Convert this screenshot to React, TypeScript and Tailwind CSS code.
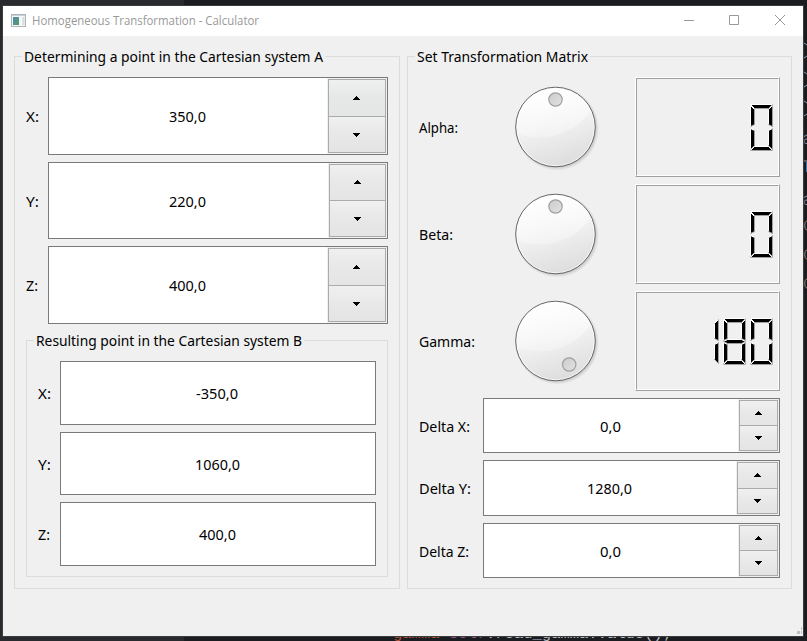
import React from "react";

const TAHOMA = "font-['Noto_Sans','Open_Sans',sans-serif]";

function Label({ text, width, className = "" }: { text: string; width: number; className?: string }) {
  return (
    <svg width={width} height={20} className={`block shrink-0 overflow-visible ${className}`}>
      <text x={0} y={16} textLength={width} lengthAdjust="spacingAndGlyphs" className={`${TAHOMA} fill-black text-[15px]`}>
        {text}
      </text>
    </svg>
  );
}

function Arrow({ down = false }: { down?: boolean }) {
  return (
    <svg width="7" height="4" className={down ? "-scale-y-100" : ""} shapeRendering="crispEdges">
      <path d="M3 0h1v1h1v1h1v1h1v1H0V3h1V2h1V1h1z" fill="#000" />
    </svg>
  );
}

type StepperProps = { width: string; up: string; hot?: boolean; upPad?: string; downPad?: string };

function Stepper({ width, up, hot = false, upPad = "", downPad = "" }: StepperProps) {
  return (
    <div className={`${width} flex shrink-0 flex-col bg-[#efefef] p-px`}>
      <div className="flex grow flex-col border border-[#ababab]">
        <div className={`${up} ${upPad} flex shrink-0 items-center justify-center border-b border-[#ababab] bg-gradient-to-b ${hot ? "from-[#eff0f0] via-[#e5e8e7] to-[#e4e7e6]" : "from-[#f0f0f0] via-[#e8e8e8] to-[#e5e5e5]"}`}>
          <Arrow />
        </div>
        <div className={`${downPad} flex grow items-center justify-center bg-gradient-to-b from-[#f0f0f0] via-[#e8e8e8] to-[#e4e4e4]`}>
          <Arrow down />
        </div>
      </div>
    </div>
  );
}

type SpinProps = {
  label: string;
  lw: number;
  col: string;
  height: string;
  value: string;
  vw: number;
  step: string;
  up: string;
  hot?: boolean;
  upPad?: string;
  downPad?: string;
};

function Spin({ label, lw, col, height, value, vw, step, up, hot, upPad, downPad }: SpinProps) {
  return (
    <div className={`flex ${height}`}>
      <div className={`${col} flex shrink-0 items-center`}>
        <Label text={label} width={lw} />
      </div>
      <div className="flex grow border border-[#7a7a7a] bg-white">
        <div className="flex grow items-center justify-center pr-0.5">
          <Label text={value} width={vw} />
        </div>
        <Stepper width={step} up={up} hot={hot} upPad={upPad} downPad={downPad} />
      </div>
    </div>
  );
}

function Result({ label, lw, height, value, vw }: { label: string; lw: number; height: string; value: string; vw: number }) {
  return (
    <div className={`flex ${height}`}>
      <div className="flex w-[22px] shrink-0 items-center">
        <Label text={label} width={lw} />
      </div>
      <div className="flex grow items-center justify-center border border-[#7a7a7a] bg-white pr-0.5">
        <Label text={value} width={vw} />
      </div>
    </div>
  );
}

function Group({ title, tw, className, children }: { title: string; tw: number; className: string; children: React.ReactNode }) {
  return (
    <div className={`relative border border-[#dcdcdc] ${className}`}>
      <div className="absolute -top-[11px] left-[7px] bg-[#f0f0f0] px-0.5">
        <Label text={title} width={tw} />
      </div>
      {children}
    </div>
  );
}

function Dial({ hx, hy }: { hx: number; hy: number }) {
  return (
    <svg width="96" height="100" className="block shrink-0">
      <defs>
        <linearGradient id="face" x1="0.35" y1="0" x2="0.65" y2="1">
          <stop offset="0" stopColor="#fefefe" />
          <stop offset="0.45" stopColor="#f2f2f2" />
          <stop offset="1" stopColor="#dcdcdc" />
        </linearGradient>
        <linearGradient id="gloss" x1="0" y1="0" x2="0" y2="1">
          <stop offset="0" stopColor="#fff" stopOpacity="0.7" />
          <stop offset="1" stopColor="#fff" stopOpacity="0.25" />
        </linearGradient>
        <radialGradient id="shade">
          <stop offset="0.9" stopColor="#000" stopOpacity="0.18" />
          <stop offset="1" stopColor="#000" stopOpacity="0" />
        </radialGradient>
        <linearGradient id="knob" x1="0" y1="0" x2="1" y2="1">
          <stop offset="0" stopColor="#cccccc" />
          <stop offset="1" stopColor="#e2e2e2" />
        </linearGradient>
        <clipPath id="disc">
          <circle cx="48.5" cy="50" r="39" />
        </clipPath>
      </defs>
      <circle cx="50" cy="51.5" r="42" fill="url(#shade)" />
      <circle cx="48.5" cy="50" r="40" fill="url(#face)" />
      <path d="M6 54C30 66 68 64 90 24V0H6Z" fill="url(#gloss)" clipPath="url(#disc)" />
      <circle cx="48.5" cy="50" r="38.800" fill="none" stroke="#fff" strokeOpacity="0.7" />
      <circle cx="48.5" cy="50" r="39.800" fill="none" stroke="#666" />
      <circle cx={hx} cy={hy} r="6.700" fill="url(#knob)" stroke="#a0a0a0" strokeWidth="1.200" />
    </svg>
  );
}

type Pt = [number, number];
const SEGMENTS: { pts: Pt[]; light: Pt[]; dark: Pt[] }[] = [
  { pts: [[0, 0], [22, 0], [18, 4], [4, 4]], light: [[4, 4], [0, 0], [22, 0]], dark: [[22, 0], [18, 4], [4, 4]] },
  { pts: [[0, 1], [4, 5], [4, 20], [0, 22]], light: [[0, 22], [0, 1], [4, 5]], dark: [[4, 5], [4, 20], [0, 22]] },
  { pts: [[22, 1], [22, 22], [18, 20], [18, 5]], light: [[18, 20], [18, 5], [22, 1]], dark: [[22, 1], [22, 22], [18, 20]] },
  { pts: [[0, 23], [4, 21], [18, 21], [22, 23], [18, 25], [4, 25]], light: [[0, 23], [4, 21], [18, 21], [22, 23]], dark: [[22, 23], [18, 25], [4, 25], [0, 23]] },
  { pts: [[0, 24], [4, 26], [4, 41], [0, 45]], light: [[0, 45], [0, 24], [4, 26]], dark: [[4, 26], [4, 41], [0, 45]] },
  { pts: [[22, 24], [22, 45], [18, 41], [18, 26]], light: [[18, 41], [18, 26], [22, 24]], dark: [[22, 24], [22, 45], [18, 41]] },
  { pts: [[0, 46], [4, 42], [18, 42], [22, 46]], light: [[0, 46], [4, 42], [18, 42], [22, 46]], dark: [[22, 46], [0, 46]] },
];
const DIGITS: Record<string, number[]> = {
  "0": [0, 1, 2, 4, 5, 6],
  "1": [2, 5],
  "8": [0, 1, 2, 3, 4, 5, 6],
};

function Lcd({ value }: { value: string }) {
  const join = (p: Pt[]) => p.map((q) => q.join(",")).join(" ");
  return (
    <div className="h-[100px] w-[145px] shrink-0 border border-t-white border-r-[#a0a0a0] border-b-[#a0a0a0] border-l-white">
      <div className="h-full border border-t-[#a0a0a0] border-r-white border-b-white border-l-[#a0a0a0]">
        <svg width="141" height="96" className="block">
          {value.split("").map((d, i) => (
            <g key={i} transform={`translate(${113.5 - 27 * (value.length - 1 - i)} 25.5)`}>
              {DIGITS[d].map((s) => (
                <g key={s} fill="none">
                  <polygon points={join(SEGMENTS[s].pts)} fill="#000" />
                  <polyline points={join(SEGMENTS[s].light)} stroke="#fff" />
                  <polyline points={join(SEGMENTS[s].dark)} stroke="#a0a0a0" />
                </g>
              ))}
            </g>
          ))}
        </svg>
      </div>
    </div>
  );
}

function Angle({ label, lw, hx, hy, value }: { label: string; lw: number; hx: number; hy: number; value: string }) {
  return (
    <div className="flex h-[100px]">
      <div className="flex w-[88px] shrink-0 items-center">
        <Label text={label} width={lw} />
      </div>
      <Dial hx={hx} hy={hy} />
      <div className="grow" />
      <Lcd value={value} />
    </div>
  );
}

export default function App() {
  return (
    <div className="relative h-[641px] w-[807px] overflow-hidden bg-[#1b1c20] pt-[5px] pl-[2px]">
      <div className="absolute top-0 left-0 h-[641px] w-[184px] bg-[#292a2d]" />
      <div className="absolute top-[624px] left-[393px] font-['Liberation_Mono',monospace] text-[15.5px] leading-5 whitespace-pre text-[#b5bac4]">
        <span className="text-[#b5533c]">gamma</span> <span className="text-[#94558d]">self</span>.read_gamma.value();
      </div>
      <svg className="absolute top-0 left-[804px]" width="3" height="300" fill="none" stroke="#8b98a8">
        <path d="M0 43l3 2M0 58l3-2M0 72l3 2M0 87l3-2M0 101l3 2M0 116l3-2" />
        <path d="M0 136.500l3-1.500M3 139c-2 0-3 1-3 2.500s1 2 3 2M0 197.500l3-1.500M3 200c-2 0-3 1-3 2.500s1 2 3 2" />
        <path d="M0 161h3" />
        <path d="M2.500 162v10" stroke="#3f77ad" />
        <path d="M3 221c-3 0-3 9 0 9M3 250c-3 0-3 9 0 9M3 279c-3 0-3 9 0 9" stroke="#a08478" />
      </svg>
      <div className="relative flex h-[632px] w-[802px] flex-col border border-[#3b3c3e] bg-[#f0f0f0]">
        <div className="flex h-[30px] shrink-0 items-center bg-white pl-2">
          <svg width="16" height="14" className="mr-[5px] shrink-0">
            <defs>
              <linearGradient id="app" x1="0" y1="0" x2="1" y2="1">
                <stop stopColor="#4c8eb0" />
                <stop offset="1" stopColor="#559a66" />
              </linearGradient>
            </defs>
            <rect x=".5" y=".5" width="14" height="12" fill="#f4f6f7" stroke="#adb3b6" />
            <path d="M1 1.500h13" stroke="#c7d2db" />
            <rect x="2" y="3" width="6" height="8" fill="url(#app)" />
            <path d="M12.500 3v8" stroke="#d4dce0" strokeWidth="2" />
          </svg>
          <svg width="228" height="20" className="overflow-visible">
            <text x="0" y="14" textLength="227" lengthAdjust="spacingAndGlyphs" className="fill-[#999999] font-['Open_Sans',sans-serif] text-[12px]">
              Homogeneous Transformation - Calculator
            </text>
          </svg>
          <div className="grow" />
          <svg width="120" height="20" fill="none" stroke="#999" className="block">
            <path d="M1 9.500h10M46.500 4.500h9v9h-9z" />
            <path d="M92 4l10 10M102 4l-10 10" />
          </svg>
        </div>
        <div className="flex gap-[7px] pt-5 pl-[11px]">
          <Group title="Determining a point in the Cartesian system A" tw={299} className="h-[533px] w-[386px]">
            <div className="flex flex-col pt-5 pr-[11px] pl-[11px]">
              <Spin label="X:" lw={13} col="w-[22px]" height="h-[78px]" value="350,0" vw={37} step="w-[60px]" up="h-[37px]" upPad="pr-px" downPad="pt-px pr-px" hot />
              <div className="h-[7px]" />
              <Spin label="Y:" lw={13} col="w-[22px]" height="h-[77px]" value="220,0" vw={37} step="w-[59px]" up="h-[36px]" upPad="pb-px" />
              <div className="h-[7px]" />
              <Spin label="Z:" lw={12} col="w-[22px]" height="h-[78px]" value="400,0" vw={37} step="w-[60px]" up="h-[37px]" upPad="pr-px" downPad="pt-px pr-px" />
              <div className="h-4" />
              <Group title="Resulting point in the Cartesian system B" tw={266} className="h-[237px]">
                <div className="flex flex-col gap-[7px] pt-5 pr-[11px] pl-[11px]">
                  <Result label="X:" lw={13} height="h-[64px]" value="-350,0" vw={42} />
                  <Result label="Y:" lw={13} height="h-[63px]" value="1060,0" vw={45} />
                  <Result label="Z:" lw={12} height="h-[64px]" value="400,0" vw={37} />
                </div>
              </Group>
            </div>
          </Group>
          <Group title="Set Transformation Matrix" tw={171} className="h-[533px] w-[385px]">
            <div className="flex flex-col gap-[7px] pt-5 pr-[11px] pl-[11px]">
              <Angle label="Alpha:" lw={39} hx={48.5} hy={22.5} value="0" />
              <Angle label="Beta:" lw={34} hx={48.5} hy={22.5} value="0" />
              <Angle label="Gamma:" lw={56} hx={62.2} hy={73.5} value="180" />
              <Spin label="Delta X:" lw={51} col="w-[64px]" height="h-[55px]" value="0,0" vw={21} step="w-[41px]" up="h-[25px]" />
              <Spin label="Delta Y:" lw={52} col="w-[64px]" height="h-[56px]" value="1280,0" vw={45} step="w-[43px]" up="h-[26px]" upPad="pb-px" />
              <Spin label="Delta Z:" lw={50} col="w-[64px]" height="h-[55px]" value="0,0" vw={21} step="w-[41px]" up="h-[25px]" />
            </div>
          </Group>
        </div>
        <svg className="absolute right-px bottom-[2px]" width="5" height="7" fill="#bfbfbf" shapeRendering="crispEdges">
          <path d="M0 4h3v3H0zM4 0h1v3H4zM4 4h1v3H4z" />
        </svg>
      </div>
    </div>
  );
}
